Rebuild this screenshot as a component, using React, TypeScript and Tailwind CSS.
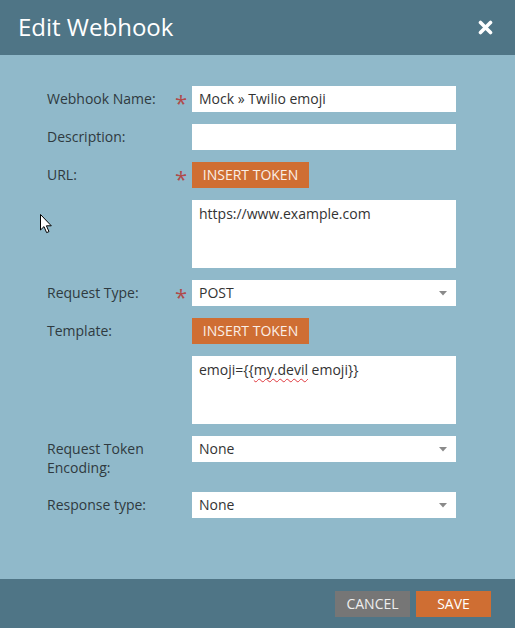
import React from "react";

const Asterisk = ({ show }: { show?: boolean }) => (
  <div className="w-[16px] shrink-0 h-[26px] relative">
    {show && (
      <span className="absolute left-[-1px] top-[3px] text-[22px] leading-[26px] text-[#b04a4a]">*</span>
    )}
  </div>
);

const Row = ({
  label,
  required,
  children,
}: {
  label?: React.ReactNode;
  required?: boolean;
  children: React.ReactNode;
}) => (
  <div className="flex items-start">
    <div className="w-[129px] shrink-0 pt-[3px] text-[14px] leading-[19px] text-[#2f3a40]">{label}</div>
    <Asterisk show={required} />
    <div className="w-[264px]">{children}</div>
  </div>
);

const TextBox = ({ value }: { value?: string }) => (
  <div className="h-[26px] bg-white px-[7px] text-[14px] leading-[26px] text-[#333]">{value}</div>
);

const Select = ({ value }: { value: string }) => (
  <div className="h-[26px] bg-white px-[7px] text-[14px] leading-[26px] text-[#333] flex items-center justify-between">
    <span>{value}</span>
    <svg width="8" height="5" viewBox="0 0 8 5" className="mr-[2px]">
      <path d="M0 0 L8 0 L4 4.5 Z" fill="#8a8a8a" />
    </svg>
  </div>
);

const TokenButton = () => (
  <button className="h-[26px] w-[117px] bg-[#cf6e33] text-[14px] text-[#fbeee6] leading-[26px] text-center">
    INSERT TOKEN
  </button>
);

const TextArea = ({ children }: { children: React.ReactNode }) => (
  <div className="h-[68px] bg-white px-[7px] pt-[4px] text-[14px] leading-[20px] text-[#333]">{children}</div>
);

export default function App() {
  return (
    <div
      className="w-[515px] h-[628px] flex flex-col bg-[#90b9ca] relative"
      style={{ fontFamily: '"Open Sans", "Noto Sans", sans-serif' }}
    >
      <div className="h-[55px] bg-[#4f7586] flex items-center justify-between pl-[18px] pr-[22px]">
        <h1 className="text-[24px] text-white leading-none pb-[2px]">Edit Webhook</h1>
        <svg width="15" height="15" viewBox="0 0 15 15">
          <path d="M2.5 2.5 L12.5 12.5 M12.5 2.5 L2.5 12.5" stroke="white" strokeWidth="3.6" strokeLinecap="round" />
        </svg>
      </div>

      <div className="flex-1 pt-[31px] pl-[47px] flex flex-col gap-3">
        <Row label="Webhook Name:" required>
          <TextBox value="Mock » Twilio emoji" />
        </Row>
        <Row label="Description:">
          <TextBox />
        </Row>
        <Row label="URL:" required>
          <TokenButton />
        </Row>
        <Row>
          <TextArea>https://www.example.com</TextArea>
        </Row>
        <Row label="Request Type:" required>
          <Select value="POST" />
        </Row>
        <Row label="Template:">
          <TokenButton />
        </Row>
        <Row>
          <TextArea>
            emoji={"{{"}
            <span className="underline decoration-wavy decoration-[#e0393e] decoration-1 underline-offset-[3px]">my.devil</span>{" "}
            emoji{"}}"}
          </TextArea>
        </Row>
        <Row
          label={
            <>
              Request Token
              <br />
              Encoding:
            </>
          }
        >
          <Select value="None" />
        </Row>
        <div className="mt-[3px]">
          <Row label="Response type:">
            <Select value="None" />
          </Row>
        </div>
      </div>

      <div className="h-[49px] bg-[#4f7586] flex items-start justify-end gap-[6px] pt-[12px] pr-[24px]">
        <button className="h-[26px] w-[75px] bg-[#767676] text-[14px] text-[#eeeeee] leading-[26px]">CANCEL</button>
        <button className="h-[26px] w-[75px] bg-[#cf6e33] text-[14px] text-white leading-[26px]">SAVE</button>
      </div>

      <svg
        className="absolute left-[40px] top-[214px]"
        width="13"
        height="20"
        viewBox="0 0 13 20"
      >
        <path
          d="M0.5 0.5 L0.5 16 L4 12.6 L6.6 18.6 L9 17.6 L6.4 11.8 L11.3 11.8 Z"
          fill="white"
          stroke="black"
          strokeWidth="1"
          strokeLinejoin="round"
        />
      </svg>
    </div>
  );
}
